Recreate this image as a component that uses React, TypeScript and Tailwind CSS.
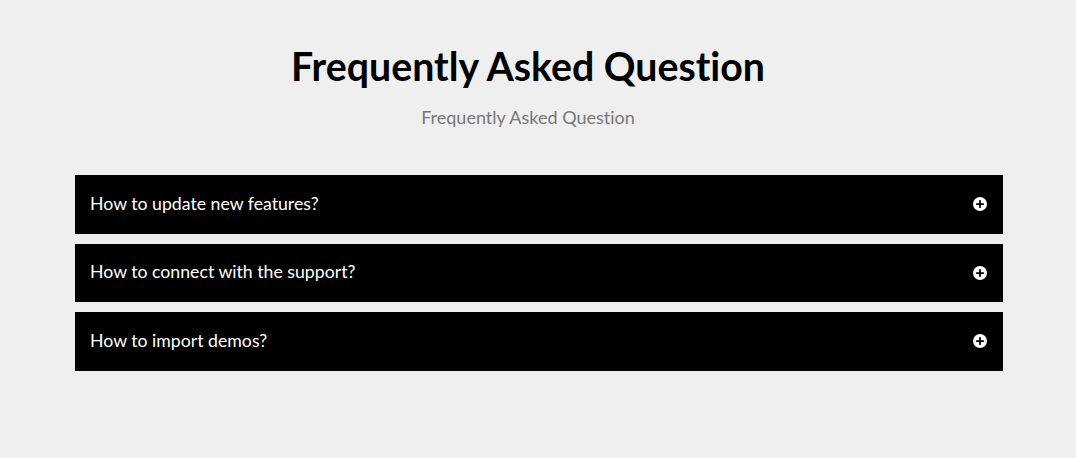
import React, { useState } from "react";

const faqs = [
  { q: "How to update new features?", a: "Open the dashboard and click update to pull the newest features." },
  { q: "How to connect with the support?", a: "Send us a message from the support page and we will reply soon." },
  { q: "How to import demos?", a: "Go to the demo importer, pick a demo and press import." },
];

function PlusCircle() {
  return (
    <svg viewBox="0 0 16 16" className="w-[14px] h-[14px]">
      <circle cx="8" cy="8" r="8" fill="#fff" />
      <rect x="7" y="3.5" width="2" height="9" rx="0.5" fill="#000" />
      <rect x="3.5" y="7" width="9" height="2" rx="0.5" fill="#000" />
    </svg>
  );
}

export default function App() {
  const [open, setOpen] = useState<number | null>(null);

  return (
    <div className="min-h-[458px] bg-[#efefef] font-['Lato',sans-serif] pt-[42px] [font-variant-ligatures:none]">
      <div className="text-center pr-[20px]">
        <h2 className="text-[39.3px] leading-[48px] font-bold text-black">Frequently Asked Question</h2>
        <p className="mt-[15px] text-[18px] leading-[24px] text-[#777]">Frequently Asked Question</p>
      </div>
      <div className="ml-[75px] w-[928px] mt-[46px] flex flex-col gap-[10px]">
        {faqs.map((f, i) => (
          <div key={f.q}>
            <button
              onClick={() => setOpen(open === i ? null : i)}
              className="w-full h-[58.5px] bg-black flex items-center justify-between pl-[15px] pr-[16px] text-left"
            >
              <span className="text-white text-[17.7px]">{f.q}</span>
              <PlusCircle />
            </button>
            {open === i && <div className="bg-white px-[15px] py-3 text-[15px] text-[#555]">{f.a}</div>}
          </div>
        ))}
      </div>
    </div>
  );
}
